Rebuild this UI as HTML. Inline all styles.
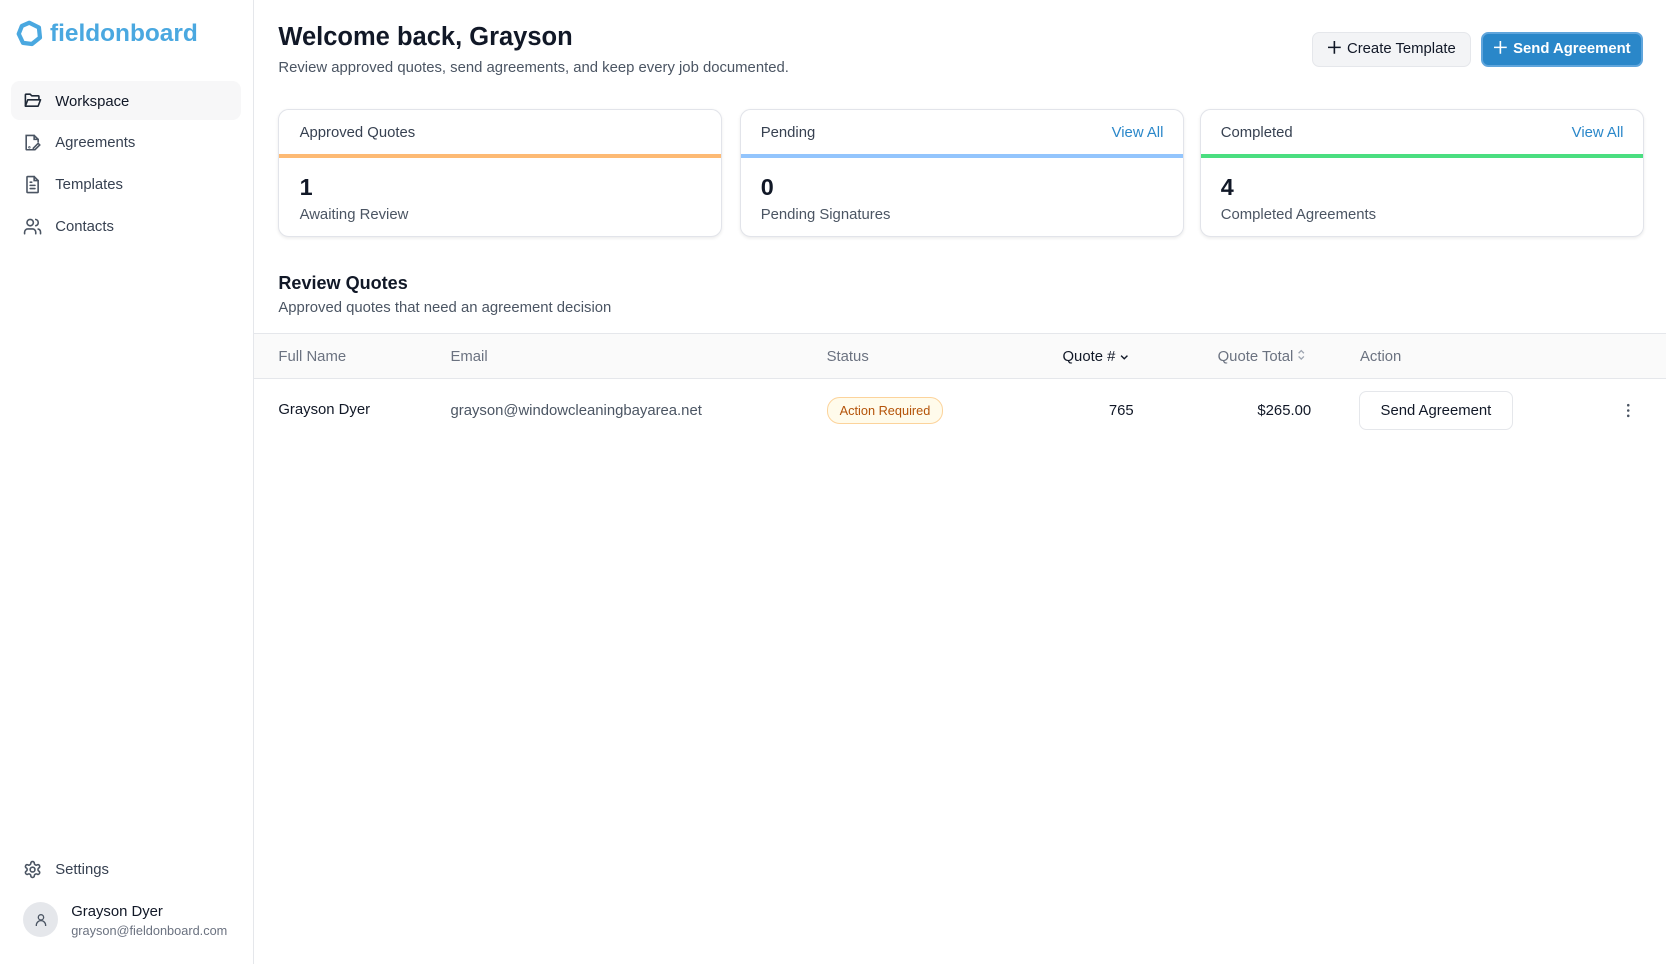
<!DOCTYPE html>
<html><head><meta charset="utf-8"><style>
html{zoom:1.0625}
body{margin:0;width:1568px;height:907px;overflow:hidden;font-family:"Liberation Sans",sans-serif;color:#111827;background:#fff;position:relative}
.a{position:absolute;white-space:nowrap}
.side{position:absolute;left:0;top:0;width:238px;height:907px;border-right:1px solid #e5e7eb}
.nav{position:absolute;left:10px;width:217px;height:37px;border-radius:8px;font-size:14px;color:#374151}
.nav svg{position:absolute;left:12px;top:10px}
.nav span{position:absolute;left:42px;top:12px}
.card{position:absolute;top:103px;width:416px;height:118px;border:1px solid #e2e4ea;border-radius:10px;box-shadow:0 1px 3px rgba(0,0,0,.08);background:#fff;overflow:hidden}
.card .h{position:absolute;left:19px;top:14px;font-size:14px;color:#374151}
.card .v{position:absolute;right:18px;top:14px;font-size:14px;color:#2a87c9}
.card .bar{position:absolute;left:0;right:0;top:41px;height:4px}
.card .n{position:absolute;left:19px;top:60px;font-size:22px;font-weight:bold}
.card .l{position:absolute;left:19px;top:91px;font-size:14px;color:#4b5563}
.th{font-size:14px;color:#6b7280;top:328px}
.btn svg{vertical-align:-1px;margin-right:6px}
</style></head><body>
<div class="side">
<svg class="a" style="left:14px;top:18px" width="27" height="27" viewBox="0 0 27 27"><polygon points="13.5,3.5 22.5,8 23.5,17.5 16,23.5 7.5,22.5 3.5,14 6.5,6.5" fill="none" stroke="#4aa8e0" stroke-width="4" stroke-linejoin="round"/></svg>
<div class="a" style="left:47px;top:19px;font-size:23px;font-weight:bold;color:#4aa8e0">fieldonboard</div>
<div class="nav" style="top:76px;background:#f7f7f8;color:#111827"><svg width="18" height="18" viewBox="0 0 24 24" fill="none" stroke="#1f2937" stroke-width="2" stroke-linejoin="round"><path d="M3 19V5a1 1 0 0 1 1-1h5l2 2h8a1 1 0 0 1 1 1v3"/><path d="M3 19l3-8h16l-3 8z"/></svg><span>Workspace</span></div>
<div class="nav" style="top:115px"><svg width="18" height="18" viewBox="0 0 24 24" fill="none" stroke="#4b5563" stroke-width="2" stroke-linecap="round"><path d="M13 21H5a1 1 0 0 1-1-1V3h10l5 5v3"/><path d="M14 3v5h5"/><path d="M13 19l6-6 2 2-6 6h-2z"/><circle cx="8" cy="18" r=".5"/></svg><span>Agreements</span></div>
<div class="nav" style="top:155px"><svg width="18" height="18" viewBox="0 0 24 24" fill="none" stroke="#4b5563" stroke-width="2" stroke-linecap="round"><path d="M14 2H6a1 1 0 0 0-1 1v18a1 1 0 0 0 1 1h12a1 1 0 0 0 1-1V7z"/><path d="M14 2v5h5M9 13h6M9 17h6M9 9h2"/></svg><span>Templates</span></div>
<div class="nav" style="top:194px"><svg width="18" height="18" viewBox="0 0 24 24" fill="none" stroke="#4b5563" stroke-width="2" stroke-linecap="round"><circle cx="9" cy="7" r="4"/><path d="M2 21v-2a4 4 0 0 1 4-4h6a4 4 0 0 1 4 4v2M16 3.1a4 4 0 0 1 0 7.8M22 21v-2a4 4 0 0 0-3-3.9"/></svg><span>Contacts</span></div>
<div class="nav" style="top:799px"><svg width="18" height="18" viewBox="0 0 24 24" fill="none" stroke="#4b5563" stroke-width="2"><path d="M12.2 2h-.4a2 2 0 0 0-2 2v.2a2 2 0 0 1-1 1.7l-.4.3a2 2 0 0 1-2 0l-.2-.1a2 2 0 0 0-2.7.7l-.2.4a2 2 0 0 0 .7 2.7l.2.1a2 2 0 0 1 1 1.7v.5a2 2 0 0 1-1 1.7l-.2.1a2 2 0 0 0-.7 2.7l.2.4a2 2 0 0 0 2.7.7l.2-.1a2 2 0 0 1 2 0l.4.3a2 2 0 0 1 1 1.7v.2a2 2 0 0 0 2 2h.4a2 2 0 0 0 2-2v-.2a2 2 0 0 1 1-1.7l.4-.3a2 2 0 0 1 2 0l.2.1a2 2 0 0 0 2.7-.7l.2-.4a2 2 0 0 0-.7-2.7l-.2-.1a2 2 0 0 1-1-1.7v-.5a2 2 0 0 1 1-1.7l.2-.1a2 2 0 0 0 .7-2.7l-.2-.4a2 2 0 0 0-2.7-.7l-.2.1a2 2 0 0 1-2 0l-.4-.3a2 2 0 0 1-1-1.7V4a2 2 0 0 0-2-2z"/><circle cx="12" cy="12" r="3"/></svg><span>Settings</span></div>
<div class="a" style="left:22px;top:849px;width:33px;height:33px;border-radius:50%;background:#e5e7eb"></div>
<svg class="a" style="left:31px;top:858px" width="15" height="15" viewBox="0 0 24 24" fill="none" stroke="#4b5563" stroke-width="2"><circle cx="12" cy="8" r="4"/><path d="M5 21v-1a6 6 0 0 1 14 0v1"/></svg>
<div class="a" style="left:67px;top:851px;font-size:14px">Grayson Dyer</div>
<div class="a" style="left:67px;top:869px;font-size:12px;color:#6b7280">grayson@fieldonboard.com</div>
</div>

<div class="a" style="left:262px;top:22px;font-size:24px;font-weight:bold">Welcome back, Grayson</div>
<div class="a" style="left:262px;top:56px;font-size:14px;color:#4b5563">Review approved quotes, send agreements, and keep every job documented.</div>
<div class="a btn" style="left:1235px;top:30px;width:148px;height:31px;border:1px solid #e5e7eb;border-radius:7px;background:#f3f4f6;font-size:14px;line-height:31px;text-align:center"><svg width="12" height="12" viewBox="0 0 12 12" stroke="#111827" stroke-width="1.5"><path d="M6 0v12M0 6h12"/></svg>Create Template</div>
<div class="a btn" style="left:1394px;top:30px;width:149px;height:29px;border:2px solid #5fa5dc;border-radius:7px;background:#2a87c9;font-size:14px;font-weight:bold;line-height:29px;text-align:center;color:#fff"><svg width="12" height="12" viewBox="0 0 12 12" stroke="#fff" stroke-width="1.5"><path d="M6 0v12M0 6h12"/></svg>Send Agreement</div>

<div class="card" style="left:262px"><div class="h">Approved Quotes</div><div class="bar" style="background:#fdba74"></div><div class="n">1</div><div class="l">Awaiting Review</div></div>
<div class="card" style="left:696px"><div class="h">Pending</div><div class="v">View All</div><div class="bar" style="background:#93c5fd"></div><div class="n">0</div><div class="l">Pending Signatures</div></div>
<div class="card" style="left:1129px"><div class="h">Completed</div><div class="v">View All</div><div class="bar" style="background:#4ade80"></div><div class="n">4</div><div class="l">Completed Agreements</div></div>

<div class="a" style="left:262px;top:257px;font-size:17px;font-weight:bold">Review Quotes</div>
<div class="a" style="left:262px;top:282px;font-size:14px;color:#4b5563">Approved quotes that need an agreement decision</div>

<div class="a" style="left:239px;top:313px;width:1329px;height:42px;background:#fafafa;border-top:1px solid #e5e7eb;border-bottom:1px solid #e5e7eb"></div>
<div class="a th" style="left:262px">Full Name</div>
<div class="a th" style="left:424px">Email</div>
<div class="a th" style="left:778px">Status</div>
<div class="a th" style="left:1000px;color:#111827">Quote # <svg width="8" height="6" viewBox="0 0 8 6" fill="none" stroke="#111827" stroke-width="1.3" style="vertical-align:0"><path d="M1 1.5l3 3 3-3"/></svg></div>
<div class="a th" style="left:1146px">Quote Total <svg width="8" height="11" viewBox="0 0 8 11" fill="none" stroke="#9ca3af" stroke-width="1.2"><path d="M1.5 4l2.5-2.5L6.5 4M1.5 7l2.5 2.5L6.5 7"/></svg></div>
<div class="a th" style="left:1280px">Action</div>

<div class="a" style="left:262px;top:378px;font-size:14px">Grayson Dyer</div>
<div class="a" style="left:424px;top:379px;font-size:14px;color:#4b5563">grayson@windowcleaningbayarea.net</div>
<div class="a" style="left:778px;top:374px;width:108px;height:23px;border:1px solid #fcd39b;border-radius:12px;background:#fffbeb;color:#b45309;font-size:12px;line-height:24px;text-align:center">Action Required</div>
<div class="a" style="left:1000px;width:67px;text-align:right;top:379px;font-size:14px">765</div>
<div class="a" style="left:1134px;width:100px;text-align:right;top:379px;font-size:14px">$265.00</div>
<div class="a" style="left:1279px;top:368px;width:143px;height:35px;border:1px solid #e5e7eb;border-radius:7px;font-size:14px;line-height:37px;text-align:center">Send Agreement</div>
<svg class="a" style="left:1528px;top:378px" width="8" height="16" viewBox="0 0 8 16"><circle cx="4" cy="3" r="1.2" fill="#4b5563"/><circle cx="4" cy="8" r="1.2" fill="#4b5563"/><circle cx="4" cy="13" r="1.2" fill="#4b5563"/></svg>
</body></html>
